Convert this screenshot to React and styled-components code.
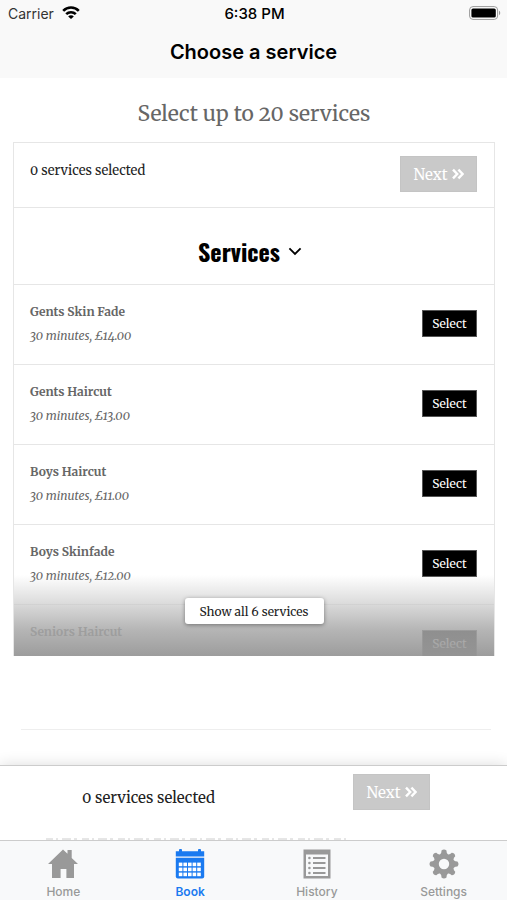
import React, { useState } from "react";
import styled, { createGlobalStyle } from "styled-components";

const services = [
  { id: 1, name: "Gents Skin Fade", detail: "30 minutes, £14.00" },
  { id: 2, name: "Gents Haircut", detail: "30 minutes, £13.00" },
  { id: 3, name: "Boys Haircut", detail: "30 minutes, £11.00" },
  { id: 4, name: "Boys Skinfade", detail: "30 minutes, £12.00" },
  { id: 5, name: "Seniors Haircut", detail: "" },
];

const WifiIcon = () => (
  <svg width="18" height="14" viewBox="0 0 18 14" aria-hidden="true">
    <g fill="none" stroke="#000" strokeWidth="2.6">
      <path d="M1.2 4.8a11 11 0 0 1 15.6 0" />
      <path d="M4.2 8.2a6.8 6.8 0 0 1 9.6 0" />
    </g>
    <path d="M9 13L6.2 10.4a3.8 3.8 0 0 1 5.6 0z" fill="#000" />
  </svg>
);

const BatteryIcon = () => (
  <svg width="32" height="14" viewBox="0 0 32 14" aria-hidden="true">
    <rect x="0.6" y="0.6" width="28" height="12.8" rx="3.4" fill="#fff" stroke="#999" />
    <rect x="2.4" y="2.4" width="24.4" height="9.2" rx="1.6" fill="#000" />
    <path d="M30 4.8c1.6.6 1.6 3.8 0 4.4z" fill="#999" />
  </svg>
);

const DoubleChevron = () => (
  <svg width="12" height="12" viewBox="0 0 12 12" aria-hidden="true">
    <path d="M1 1.6L5.2 6 1 10.400M6.400 1.600L10.600 6l-4.200 4.400" fill="none" stroke="#fff" strokeWidth="2.400" />
  </svg>
);

const ChevronDown = () => (
  <svg width="14" height="10" viewBox="0 0 14 10" aria-hidden="true">
    <path d="M1.400 2.400L7 8l5.600-5.600" fill="none" stroke="#000" strokeWidth="1.800" />
  </svg>
);

const HomeIcon = () => (
  <svg width="30" height="30" viewBox="0 0 30 30" aria-hidden="true">
    <path d="M15 0.500L19.500 4.800V1h4.200v7.900L30 15h-4v14H18.400v-9h-5.800v9H4V15H0z" fill="currentColor" />
  </svg>
);

const BookIcon = () => (
  <svg width="30" height="30" viewBox="0 0 30 30" aria-hidden="true">
    <path d="M.8 2.200H4V1.300a1.500 1.500 0 0 1 3 0v.9h16v-.9a1.500 1.500 0 0 1 3 0v.9h3.200v5.300H.8z" fill="currentColor" />
    <path d="M.8 8.800h28.400v18.700a2 2 0 0 1-2 2H2.800a2 2 0 0 1-2-2z" fill="currentColor" />
    <g fill="#fff">
      {[13.6, 18.6, 23.6].map((y) =>
        [3.8, 8.4, 13, 17.6, 22.2].map((x) => (
          <rect key={`${x}-${y}`} x={x} y={y} width="3.6" height="3.6" />
        ))
      )}
    </g>
  </svg>
);

const HistoryIcon = () => (
  <svg width="30" height="30" viewBox="0 0 30 30" aria-hidden="true">
    <path d="M1.500 0.500h27v29h-27zM4 5.500V27h22V5.500z" fill="currentColor" fillRule="evenodd" />
    <g fill="currentColor">
      {[8, 13, 18, 23].map((y) => (
        <React.Fragment key={y}>
          <circle cx="7.400" cy={y + 1} r="1.300" />
          <rect x="11" y={y} width="12.500" height="2" />
        </React.Fragment>
      ))}
    </g>
  </svg>
);

const SettingsIcon = () => (
  <svg width="30" height="30" viewBox="0 0 30 30" aria-hidden="true">
    <g fill="currentColor">
      {[0, 45, 90, 135, 180, 225, 270, 315].map((deg) => (
        <path key={deg} transform={`rotate(${deg} 15 15)`} d="M10.600 6.500L12.300 3.600 12.500 1.600Q15-.6 17.500 1.600L17.700 3.600 19.400 6.500z" />
      ))}
      <path d="M15 4.800a10.200 10.200 0 1 0 0 20.400a10.200 10.200 0 0 0 0-20.400zm0 5a5.200 5.200 0 1 1 0 10.400a5.200 5.200 0 0 1 0-10.400z" fillRule="evenodd" />
    </g>
  </svg>
);

const tabs = [
  { name: "Home", Icon: HomeIcon },
  { name: "Book", Icon: BookIcon },
  { name: "History", Icon: HistoryIcon },
  { name: "Settings", Icon: SettingsIcon },
];

const App = () => {
  const [selected, setSelected] = useState([]);
  const [tab, setTab] = useState("Book");
  const [showAll, setShowAll] = useState(false);

  const toggle = (id) => {
    setSelected((ids) =>
      ids.includes(id) ? ids.filter((item) => item !== id) : [...ids, id]
    );
  };

  return (
    <>
      <GlobalStyle />
      <Screen>
        <Header>
          <StatusBar>
            <Carrier>
              Carrier <WifiIcon />
            </Carrier>
            <Clock>6:38 PM</Clock>
            <BatteryIcon />
          </StatusBar>
          <Title>Choose a service</Title>
        </Header>
        <Content>
          <Heading>Select up to 20 services</Heading>
          <Card $open={showAll}>
            <Summary>
              <Count>{selected.length} services selected</Count>
              <NextButton disabled={!selected.length}>
                Next <DoubleChevron />
              </NextButton>
            </Summary>
            <GroupButton>
              Services <ChevronDown />
            </GroupButton>
            <List>
              {services.map((service) => (
                <Row key={service.id}>
                  <div>
                    <Name>{service.name}</Name>
                    <Detail>{service.detail}</Detail>
                  </div>
                  <SelectButton onClick={() => toggle(service.id)}>Select</SelectButton>
                </Row>
              ))}
            </List>
            {!showAll && (
              <Fade>
                <ShowAllButton onClick={() => setShowAll(true)}>
                  Show all 6 services
                </ShowAllButton>
              </Fade>
            )}
          </Card>
          <Divider />
        </Content>
        <BottomBar>
          <Count $large>{selected.length} services selected</Count>
          <NextButton disabled={!selected.length}>
            Next <DoubleChevron />
          </NextButton>
          <Peek viewBox="0 0 302 3" aria-hidden="true">
            <path d="M0 2h302" stroke="#ccc" strokeWidth="1" strokeDasharray="7 3 2 4 9 3 3 5" />
          </Peek>
        </BottomBar>
        <TabBar>
          {tabs.map(({ name, Icon }) => (
            <Tab key={name} $active={tab === name} onClick={() => setTab(name)}>
              <Icon />
              {name}
            </Tab>
          ))}
        </TabBar>
      </Screen>
    </>
  );
};

export default App;

const serif = `Merriweather, "DejaVu Serif Condensed", "DejaVu Serif", serif`;

const GlobalStyle = createGlobalStyle`
  * {
    box-sizing: border-box;
  }
  body {
    margin: 0;
    background: #fff;
    font-family: ${serif};
    font-variant-numeric: oldstyle-nums;
  }
  button {
    font-family: inherit;
    font-variant-numeric: inherit;
    cursor: pointer;
  }
`;

const Screen = styled.div`
  display: flex;
  flex-direction: column;
  height: 100vh;
`;

const Header = styled.header`
  background: #f9f9f9;
  font-family: Inter, sans-serif;
  color: #000;
`;

const StatusBar = styled.div`
  display: grid;
  grid-template-columns: 1fr auto 1fr;
  align-items: center;
  height: 26px;
  padding: 0 6px 0 8px;
  font-size: 14px;
  > svg {
    justify-self: end;
  }
`;

const Carrier = styled.span`
  display: flex;
  align-items: center;
  gap: 8px;
  color: #333;
`;

const Clock = styled.span`
  font-size: 15px;
  font-weight: 500;
`;

const Title = styled.h1`
  margin: 0;
  height: 52px;
  line-height: 52px;
  font-size: 20px;
  font-weight: 600;
  text-align: center;
`;

const Content = styled.main`
  flex: 1;
  min-height: 0;
  overflow: hidden;
  padding: 20px 12px 0 13px;
`;

const Heading = styled.h2`
  margin: 0 0 12px;
  line-height: 32px;
  font-size: 21px;
  font-weight: 400;
  text-align: center;
  color: #666;
`;

const Card = styled.section`
  position: relative;
  max-height: ${({ $open }) => ($open ? "none" : "514px")};
  overflow: hidden;
  border: 1px solid #e6e6e6;
  border-bottom: 0;
`;

const Summary = styled.div`
  display: flex;
  justify-content: space-between;
  padding: 13px 17px 15px 16px;
  border-bottom: 1px solid #e6e6e6;
`;

const Count = styled.span`
  line-height: ${({ $large }) => ($large ? "48px" : "30px")};
  font-size: ${({ $large }) => ($large ? "15px" : "13px")};
  color: #222;
`;

const NextButton = styled.button`
  display: flex;
  align-items: center;
  justify-content: center;
  gap: 4px;
  width: 77px;
  height: 36px;
  padding: 0;
  border: 1px solid #c4c4c4;
  background: #c9c9c9;
  color: #fff;
  font-size: 15px;
`;

const GroupButton = styled.button`
  display: flex;
  align-items: center;
  justify-content: center;
  gap: 8px;
  width: 100%;
  height: 76px;
  padding: 10px 8px 0 0;
  border: 0;
  background: #fff;
  && {
    font-family: Oswald, "Liberation Sans Narrow", "Liberation Sans", sans-serif;
  }
  font-size: 24px;
  font-weight: 700;
  color: #000;
`;

const List = styled.ul`
  margin: 0;
  padding: 0;
  list-style: none;
`;

const Row = styled.li`
  display: flex;
  justify-content: space-between;
  align-items: flex-start;
  height: 80px;
  padding: 14px 17px 0 16px;
  border-top: 1px solid #e6e6e6;
  > button {
    margin-top: 11px;
  }
`;

const Name = styled.h3`
  margin: 0;
  line-height: 25px;
  font-size: 12px;
  font-weight: 700;
  color: #666;
`;

const Detail = styled.p`
  margin: 0;
  line-height: 24px;
  font-size: 12px;
  font-style: italic;
  color: #666;
`;

const SelectButton = styled.button`
  width: 55px;
  height: 27px;
  padding: 0;
  border: 1px solid #555;
  background: #000;
  color: #fff;
  font-size: 12px;
`;

const Fade = styled.div`
  position: absolute;
  left: 0;
  right: 0;
  bottom: 0;
  display: flex;
  justify-content: center;
  height: 81px;
  padding-top: 23px;
  background: linear-gradient(
    rgba(255, 255, 255, 0),
    rgba(205, 205, 205, 0.65) 32%,
    rgba(168, 168, 168, 0.85) 68%,
    rgba(153, 153, 153, 0.97)
  );
`;

const ShowAllButton = styled.button`
  width: 139px;
  height: 26px;
  padding: 0;
  border: 0;
  border-radius: 3px;
  background: #fff;
  box-shadow: 0 1px 4px rgba(0, 0, 0, 0.4);
  font-size: 12px;
  color: #222;
`;

const Divider = styled.hr`
  margin: 73px 4px 0 8px;
  border: 0;
  border-top: 1px solid #eee;
`;

const BottomBar = styled.div`
  position: relative;
  display: flex;
  justify-content: space-between;
  height: 75px;
  padding: 8px 77px 0 82px;
  border-top: 1px solid #ccc;
  background: #fff;
  box-shadow: 0 0 14px rgba(0, 0, 0, 0.14);
`;

const Peek = styled.svg`
  position: absolute;
  left: 46px;
  bottom: 0;
  width: 302px;
  height: 3px;
`;

const TabBar = styled.nav`
  position: relative;
  display: grid;
  grid-template-columns: repeat(4, 1fr);
  height: 60px;
  border-top: 1px solid #ccc;
  background: #f8f9fa;
  font-family: Inter, sans-serif;
`;

const Tab = styled.button`
  display: flex;
  flex-direction: column;
  align-items: center;
  gap: 5px;
  padding: 8px 0 0;
  border: 0;
  background: none;
  font-size: 12px;
  font-weight: ${({ $active }) => ($active ? 600 : 500)};
  color: ${({ $active }) => ($active ? "#1a7af0" : "#999")};
`;
